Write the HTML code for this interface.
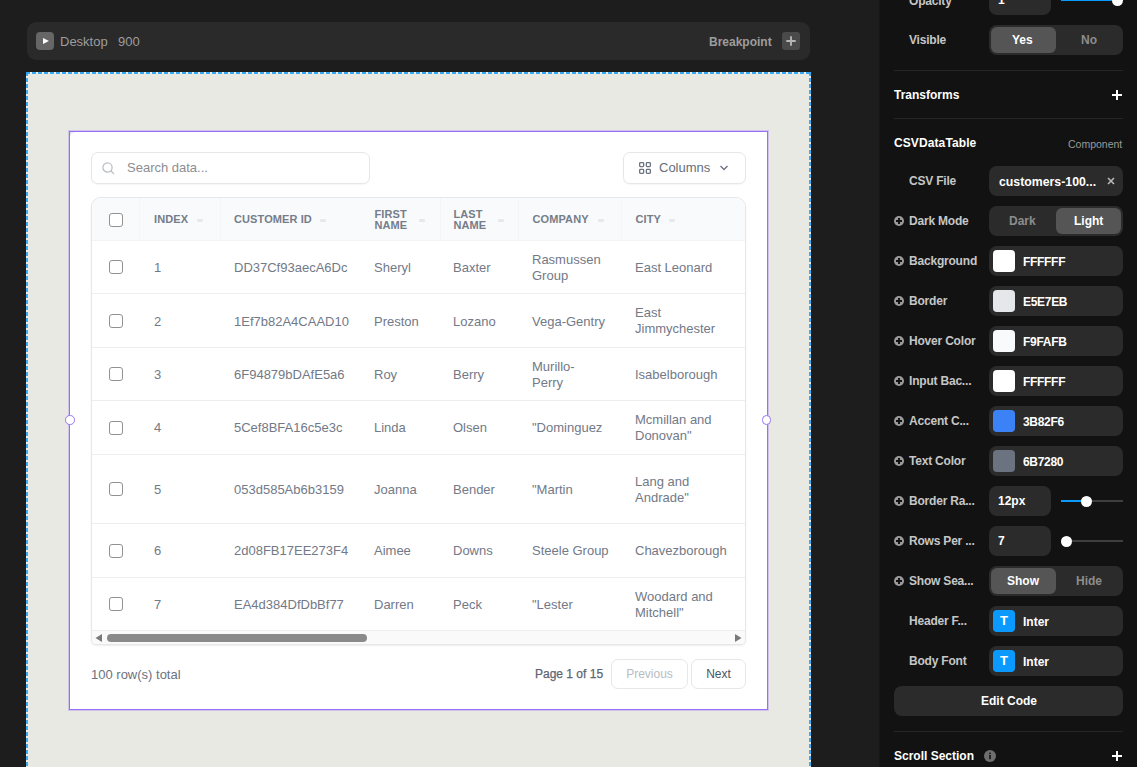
<!DOCTYPE html>
<html><head><meta charset="utf-8">
<style>
*{box-sizing:border-box;margin:0;padding:0}
html,body{width:1137px;height:767px;overflow:hidden;background:#1d1d1d;font-family:"Liberation Sans",sans-serif}
.a{position:absolute;white-space:nowrap}
#topbar{position:absolute;left:27px;top:22px;width:783px;height:38px;background:#2a2a2a;border-radius:9px}
#play{position:absolute;left:9px;top:10px;width:18px;height:18px;background:#666;border-radius:4px}
#play:after{content:"";position:absolute;left:7px;top:5.5px;border-left:6.5px solid #fff;border-top:3.5px solid transparent;border-bottom:3.5px solid transparent}
.tb{position:absolute;top:12px;font-size:13px;line-height:16px;color:#9d9d9d}
#bpplus{position:absolute;left:755px;top:10px;width:18px;height:18px;background:#4a4a4a;border-radius:3px}
#frame{position:absolute;left:26px;top:72px;width:785px;height:720px;background:#e9e9e4}
.dh{position:absolute;height:2px;background:repeating-linear-gradient(90deg,#22a0f4 0 4px,#f1ede7 4px 6px)}
.dv{position:absolute;width:2px;background:repeating-linear-gradient(180deg,#22a0f4 0 4px,#f1ede7 4px 6px)}
#comp{position:absolute;left:69px;top:131px;width:698.75px;height:579px;border:1px solid #9a6ef7;outline:1px solid rgba(160,124,248,0.35);background:#e9e9e4}
#card{position:absolute;left:0;top:0;right:0;bottom:0;background:#fff;border-radius:6px 0 0 0}
.handle{position:absolute;width:9.5px;height:9.5px;border-radius:50%;border:1.6px solid #9d72f7;background:#fff}
/* card content: coordinates relative to body */
.inp{position:absolute;border:1px solid #e5e7eb;border-radius:7px;background:#fff;box-shadow:0 1px 1.5px rgba(0,0,0,0.04)}
.ph{font-size:13px;line-height:16px;color:#8c8d91}
#table{position:absolute;left:91px;top:197px;width:655px;height:448px;border:1px solid #e5e7eb;border-radius:10px 10px 5px 5px;overflow:hidden;background:#fff;box-shadow:0 1px 2px rgba(0,0,0,0.07)}
#thead{position:absolute;left:0;top:0;width:100%;height:43px;background:#f9fafb;border-bottom:1px solid #f3f4f6}
.vd{position:absolute;top:0;width:1px;height:43px;background:#f4f5f7}
.hd{position:absolute;font-size:11px;line-height:10.5px;font-weight:bold;color:#767d8a;letter-spacing:0.1px;white-space:nowrap}
.so{position:absolute;width:6px;height:3px;background:#e6e8ec;border-radius:1px}
.rb{position:absolute;left:0;width:100%;height:1px;background:#eceef1}
.cb{position:absolute;width:14px;height:14px;border:1.3px solid #929292;border-radius:3px;background:#fff}
.td{position:absolute;font-size:13px;line-height:16px;color:#727987;white-space:nowrap}
#sbar{position:absolute;left:0;top:433px;width:100%;height:14px;background:#fafafa}
.btn{position:absolute;border:1px solid #e5e7eb;border-radius:7px;background:#fff;font-size:12px;line-height:29px;text-align:center}
/* panel */
#panel{position:absolute;left:879px;top:0;width:258px;height:767px;background:#121212;border-left:1px solid #171717}
.pl{position:absolute;font-size:12px;line-height:14px;font-weight:bold;color:#c6c6c6;white-space:nowrap;letter-spacing:-0.2px}
.ph2{position:absolute;font-size:12px;line-height:14px;font-weight:bold;color:#fff;white-space:nowrap}
.ctl{position:absolute;left:989px;width:134px;height:30px;background:#2b2b2b;border-radius:8px}
.pill{position:absolute;top:2px;width:65px;height:26px;background:#555;border-radius:6px}
.seg{position:absolute;top:8px;font-size:12px;line-height:14px;font-weight:bold;white-space:nowrap}
.sw{position:absolute;left:4px;top:4px;width:22px;height:22px;border-radius:4px}
.hex{position:absolute;left:34px;top:8.5px;font-size:12px;line-height:14px;font-weight:bold;color:#fff;letter-spacing:-0.3px}
.pc{position:absolute;left:894px;width:10px;height:10px;border-radius:50%;background:#9a9a9a}
.pc:before{content:"";position:absolute;left:2px;top:4px;width:6px;height:2px;background:#121212}
.pc:after{content:"";position:absolute;left:4px;top:2px;width:2px;height:6px;background:#121212}
.sep{position:absolute;left:894px;width:229px;height:1px;background:#262626}
.plus{position:absolute;width:10px;height:10px}
.plus:before{content:"";position:absolute;left:0;top:4.1px;width:10px;height:1.8px;background:#fff}
.plus:after{content:"";position:absolute;left:4.1px;top:0;width:1.8px;height:10px;background:#fff}
.track{position:absolute;height:2px;background:#3e3e3e}
.knob{position:absolute;width:11px;height:11px;border-radius:50%;background:#fff}
.ticon{position:absolute;left:4px;top:4px;width:22px;height:22px;border-radius:4px;background:#0a99ff;color:#fff;font-size:13px;font-weight:bold;line-height:22px;text-align:center}
</style></head><body>
<div id="topbar">
  <div id="play"></div>
  <div class="tb" style="left:33px">Desktop</div>
  <div class="tb" style="left:91px">900</div>
  <div class="tb" style="left:682px;font-weight:bold;font-size:12px;top:11.5px">Breakpoint</div>
  <div id="bpplus"><svg class="a" style="left:4px;top:4px" width="10" height="10" viewBox="0 0 10 10"><path d="M5 0.3V9.7M0.3 5H9.7" stroke="#b4b4b4" stroke-width="1.9"/></svg></div>
</div>
<div id="frame"></div><div class="dh" style="left:26px;top:72px;width:785px;opacity:0.9"></div><div class="dv" style="left:26px;top:72px;height:700px;opacity:0.85"></div><div class="dv" style="left:809px;top:72px;height:700px;opacity:0.85"></div>
<div id="comp"><div id="card"></div></div>
<div class="handle" style="left:65px;top:415px"></div>
<div class="handle" style="left:761.5px;top:415px"></div>

<!-- search -->
<div class="inp" style="left:91px;top:152px;width:279px;height:32px"></div>
<svg class="a" style="left:100px;top:160px" width="16" height="16" viewBox="0 0 16 16"><circle cx="7.5" cy="7.5" r="4.6" fill="none" stroke="#bcc0c6" stroke-width="1.3"/><line x1="11" y1="11" x2="13.5" y2="13.5" stroke="#bcc0c6" stroke-width="1.3" stroke-linecap="round"/></svg>
<div class="a ph" style="left:127px;top:160px">Search data...</div>
<!-- columns -->
<div class="inp" style="left:623px;top:152px;width:123px;height:32px"></div>
<svg class="a" style="left:638px;top:161px" width="14" height="14" viewBox="0 0 14 14"><g fill="none" stroke="#6b7280" stroke-width="1.3"><rect x="1.65" y="1.65" width="4" height="4" rx="0.8"/><rect x="8.35" y="1.65" width="4" height="4" rx="0.8"/><rect x="1.65" y="8.35" width="4" height="4" rx="0.8"/><rect x="8.35" y="8.35" width="4" height="4" rx="0.8"/></g></svg>
<div class="a ph" style="left:659px;top:160px;color:#666d7a">Columns</div>
<svg class="a" style="left:718px;top:163px" width="12" height="10" viewBox="0 0 12 10"><polyline points="2.5,3 6,6.5 9.5,3" fill="none" stroke="#6b7280" stroke-width="1.3"/></svg>

<!-- table -->
<div id="table">
  <div id="thead">
    <div class="vd" style="left:47px"></div>
    <div class="vd" style="left:128px"></div>
    <div class="vd" style="left:348px"></div>
    <div class="vd" style="left:426px"></div>
    <div class="vd" style="left:529px"></div>
  </div>
  <div class="rb" style="top:95px"></div>
  <div class="rb" style="top:149px"></div>
  <div class="rb" style="top:202px"></div>
  <div class="rb" style="top:256px"></div>
  <div class="rb" style="top:325px"></div>
  <div class="rb" style="top:379px"></div>
  <div class="rb" style="top:432px"></div>
  <div id="sbar"></div>
</div>
<!-- header text -->
<div class="cb" style="left:109px;top:212.5px"></div>
<div class="hd" style="left:154px;top:214px">INDEX</div><div class="so" style="left:197px;top:219px"></div>
<div class="hd" style="left:234px;top:214px">CUSTOMER ID</div><div class="so" style="left:320px;top:219px"></div>
<div class="hd" style="left:374.5px;top:209px">FIRST<br>NAME</div><div class="so" style="left:419px;top:219px"></div>
<div class="hd" style="left:453.5px;top:209px">LAST<br>NAME</div><div class="so" style="left:498px;top:219px"></div>
<div class="hd" style="left:532.5px;top:214px">COMPANY</div><div class="so" style="left:598px;top:219px"></div>
<div class="hd" style="left:635.5px;top:214px">CITY</div><div class="so" style="left:669px;top:219px"></div>

<!-- rows -->
<div class="cb" style="left:109px;top:260px"></div>
<div class="td" style="left:154px;top:260px">1</div>
<div class="td" style="left:234px;top:260px">DD37Cf93aecA6Dc</div>
<div class="td" style="left:374px;top:260px">Sheryl</div>
<div class="td" style="left:453px;top:260px">Baxter</div>
<div class="td" style="left:532px;top:252px">Rasmussen<br>Group</div>
<div class="td" style="left:635px;top:260px">East Leonard</div>

<div class="cb" style="left:109px;top:314px"></div>
<div class="td" style="left:154px;top:314px">2</div>
<div class="td" style="left:234px;top:314px">1Ef7b82A4CAAD10</div>
<div class="td" style="left:374px;top:314px">Preston</div>
<div class="td" style="left:453px;top:314px">Lozano</div>
<div class="td" style="left:532px;top:314px">Vega-Gentry</div>
<div class="td" style="left:635px;top:305px">East<br>Jimmychester</div>

<div class="cb" style="left:109px;top:367px"></div>
<div class="td" style="left:154px;top:367px">3</div>
<div class="td" style="left:234px;top:367px">6F94879bDAfE5a6</div>
<div class="td" style="left:374px;top:367px">Roy</div>
<div class="td" style="left:453px;top:367px">Berry</div>
<div class="td" style="left:532px;top:359px">Murillo-<br>Perry</div>
<div class="td" style="left:635px;top:367px">Isabelborough</div>

<div class="cb" style="left:109px;top:421px"></div>
<div class="td" style="left:154px;top:420px">4</div>
<div class="td" style="left:234px;top:420px">5Cef8BFA16c5e3c</div>
<div class="td" style="left:374px;top:420px">Linda</div>
<div class="td" style="left:453px;top:420px">Olsen</div>
<div class="td" style="left:532px;top:420px">"Dominguez</div>
<div class="td" style="left:635px;top:412px">Mcmillan and<br>Donovan"</div>

<div class="cb" style="left:109px;top:482px"></div>
<div class="td" style="left:154px;top:482px">5</div>
<div class="td" style="left:234px;top:482px">053d585Ab6b3159</div>
<div class="td" style="left:374px;top:482px">Joanna</div>
<div class="td" style="left:453px;top:482px">Bender</div>
<div class="td" style="left:532px;top:482px">"Martin</div>
<div class="td" style="left:635px;top:474px">Lang and<br>Andrade"</div>

<div class="cb" style="left:109px;top:544px"></div>
<div class="td" style="left:154px;top:543px">6</div>
<div class="td" style="left:234px;top:543px">2d08FB17EE273F4</div>
<div class="td" style="left:374px;top:543px">Aimee</div>
<div class="td" style="left:453px;top:543px">Downs</div>
<div class="td" style="left:532px;top:543px">Steele Group</div>
<div class="td" style="left:635px;top:543px">Chavezborough</div>

<div class="cb" style="left:109px;top:597px"></div>
<div class="td" style="left:154px;top:597px">7</div>
<div class="td" style="left:234px;top:597px">EA4d384DfDbBf77</div>
<div class="td" style="left:374px;top:597px">Darren</div>
<div class="td" style="left:453px;top:597px">Peck</div>
<div class="td" style="left:532px;top:597px">"Lester</div>
<div class="td" style="left:635px;top:589px">Woodard and<br>Mitchell"</div>

<!-- scrollbar -->
<svg class="a" style="left:95px;top:634px" width="8" height="8" viewBox="0 0 8 8"><polygon points="7,0 7,8 0.5,4" fill="#7a7a7a"/></svg>
<div class="a" style="left:107px;top:634px;width:260px;height:8px;border-radius:4px;background:#8a8a8a"></div>
<svg class="a" style="left:734px;top:634px" width="8" height="8" viewBox="0 0 8 8"><polygon points="1,0 1,8 7.5,4" fill="#7a7a7a"/></svg>

<!-- footer -->
<div class="a" style="left:91px;top:667px;font-size:13px;line-height:16px;color:#6b7280">100 row(s) total</div>
<div class="a" style="left:535px;top:666px;font-size:12px;line-height:16px;color:#5d6472;-webkit-text-stroke:0.25px #5d6472">Page 1 of 15</div>
<div class="btn" style="left:611px;top:659px;width:77px;height:30px;color:#b8bcc3">Previous</div>
<div class="btn" style="left:691px;top:659px;width:55px;height:30px;color:#4b5563">Next</div>

<!-- panel -->
<div id="panel"></div>
<div class="pl" style="left:909px;top:-6.5px">Opacity</div>
<div class="ctl" style="top:-15px;width:62px"><div class="a" style="left:9px;top:8px;font-size:12px;font-weight:bold;color:#fff;line-height:14px">1</div></div>
<div class="track" style="left:1061px;top:-1px;width:56px;background:#0a99ff"></div>
<div class="knob" style="left:1112px;top:-5px"></div>

<div class="pl" style="left:909px;top:33px">Visible</div>
<div class="ctl" style="top:25px"><div class="pill" style="left:2px"></div><div class="seg" style="left:23px;color:#fff">Yes</div><div class="seg" style="left:92px;color:#8d8d8d">No</div></div>
<div class="sep" style="top:70px"></div>
<div class="ph2" style="left:894px;top:88px">Transforms</div>
<div class="plus" style="left:1112px;top:90px"></div>
<div class="sep" style="top:118px"></div>
<div class="ph2" style="left:894px;top:136px;letter-spacing:0.1px">CSVDataTable</div>
<div class="a" style="left:1068px;top:138px;font-size:10.5px;line-height:13px;color:#9a9a9a">Component</div>

<div class="pl" style="left:909px;top:174px">CSV File</div>
<div class="ctl" style="top:166px"><div class="a" style="left:10px;top:9px;font-size:12.3px;line-height:14px;font-weight:bold;color:#fff">customers-100...</div><svg class="a" style="left:118px;top:11px" width="8" height="8" viewBox="0 0 8 8"><path d="M1 1L7 7M7 1L1 7" stroke="#b8b8b8" stroke-width="1.6"/></svg></div>

<div class="pc" style="top:216px"></div><div class="pl" style="left:909px;top:214px">Dark Mode</div>
<div class="ctl" style="top:206px"><div class="pill" style="left:67px"></div><div class="seg" style="left:20px;color:#8d8d8d">Dark</div><div class="seg" style="left:85px;color:#fff">Light</div></div>

<div class="pc" style="top:256px"></div><div class="pl" style="left:909px;top:254px">Background</div>
<div class="ctl" style="top:246px"><div class="sw" style="background:#fff"></div><div class="hex">FFFFFF</div></div>
<div class="pc" style="top:296px"></div><div class="pl" style="left:909px;top:294px">Border</div>
<div class="ctl" style="top:286px"><div class="sw" style="background:#e5e7eb"></div><div class="hex">E5E7EB</div></div>
<div class="pc" style="top:336px"></div><div class="pl" style="left:909px;top:334px">Hover Color</div>
<div class="ctl" style="top:326px"><div class="sw" style="background:#f9fafb"></div><div class="hex">F9FAFB</div></div>
<div class="pc" style="top:376px"></div><div class="pl" style="left:909px;top:374px">Input Bac...</div>
<div class="ctl" style="top:366px"><div class="sw" style="background:#fff"></div><div class="hex">FFFFFF</div></div>
<div class="pc" style="top:416px"></div><div class="pl" style="left:909px;top:414px">Accent C...</div>
<div class="ctl" style="top:406px"><div class="sw" style="background:#3b82f6"></div><div class="hex">3B82F6</div></div>
<div class="pc" style="top:456px"></div><div class="pl" style="left:909px;top:454px">Text Color</div>
<div class="ctl" style="top:446px"><div class="sw" style="background:#6b7280"></div><div class="hex">6B7280</div></div>

<div class="pc" style="top:496px"></div><div class="pl" style="left:909px;top:494px">Border Ra...</div>
<div class="ctl" style="top:486px;width:62px"><div class="a" style="left:9px;top:8px;font-size:12px;line-height:14px;font-weight:bold;color:#fff">12px</div></div>
<div class="track" style="left:1061px;top:500px;width:62px"></div>
<div class="track" style="left:1061px;top:500px;width:25px;background:#0a99ff"></div>
<div class="knob" style="left:1080.5px;top:495.5px"></div>

<div class="pc" style="top:536px"></div><div class="pl" style="left:909px;top:534px">Rows Per ...</div>
<div class="ctl" style="top:526px;width:62px"><div class="a" style="left:9px;top:8px;font-size:12px;line-height:14px;font-weight:bold;color:#fff">7</div></div>
<div class="track" style="left:1061px;top:540px;width:62px"></div>
<div class="knob" style="left:1060.5px;top:535.5px"></div>

<div class="pc" style="top:576px"></div><div class="pl" style="left:909px;top:574px">Show Sea...</div>
<div class="ctl" style="top:566px"><div class="pill" style="left:2px"></div><div class="seg" style="left:18px;color:#fff">Show</div><div class="seg" style="left:87px;color:#8d8d8d">Hide</div></div>

<div class="pl" style="left:909px;top:614px">Header F...</div>
<div class="ctl" style="top:606px"><div class="ticon">T</div><div class="hex" style="letter-spacing:0">Inter</div></div>
<div class="pl" style="left:909px;top:654px">Body Font</div>
<div class="ctl" style="top:646px"><div class="ticon">T</div><div class="hex" style="letter-spacing:0">Inter</div></div>

<div class="ctl" style="left:894px;top:686px;width:229px;height:30px"><div class="a" style="left:87px;top:8px;font-size:12px;line-height:14px;font-weight:bold;color:#fff">Edit Code</div></div>
<div class="sep" style="top:731px"></div>
<div class="ph2" style="left:894px;top:749px">Scroll Section</div>
<svg class="a" style="left:984px;top:750px" width="12" height="12" viewBox="0 0 12 12"><circle cx="6" cy="6" r="6" fill="#6e6e6e"/><rect x="5.2" y="5" width="1.6" height="4.2" fill="#121212"/><circle cx="6" cy="3.3" r="0.9" fill="#121212"/></svg>
<div class="plus" style="left:1112px;top:751px"></div>
</body></html>
